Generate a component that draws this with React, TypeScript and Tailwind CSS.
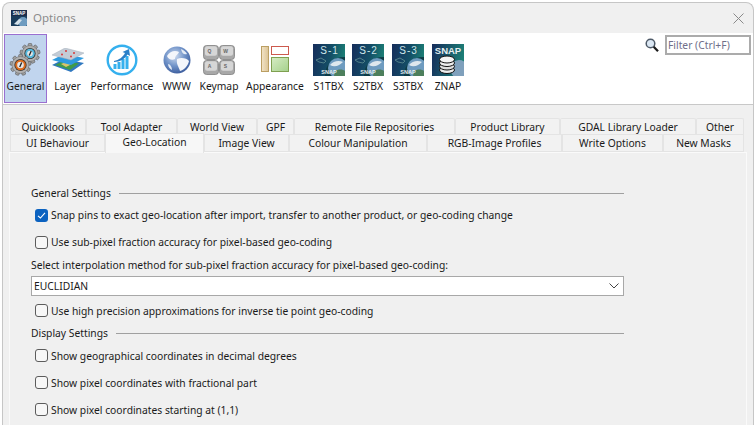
import React from "react";

const font = "font-['Noto_Sans',Arial,sans-serif]";

function Gear({ cx, cy, r, c }: { cx: number; cy: number; r: number; c: string }) {
  const teeth = Array.from({ length: 9 }, (_, i) => i * 40);
  return (
    <g>
      {teeth.map((a) => (
        <rect key={a} x={cx - 1.8} y={cy - r - 2} width={3.6} height={5} rx={0.8} fill="#a2a2a2" stroke="#4a4a4a" strokeWidth={0.5} transform={`rotate(${a} ${cx} ${cy})`} />
      ))}
      <circle cx={cx} cy={cy} r={r} fill="#b0b0b0" stroke="#666" strokeWidth={0.5} />
      <circle cx={cx} cy={cy} r={r - 2.4} fill="#333" />
      <circle cx={cx} cy={cy} r={r - 3.2} fill={c} />
      <circle cx={cx} cy={cy} r={r - 5.2} fill="#e6e6e6" />
      <line x1={cx - 0.8} y1={cy + 2} x2={cx + 1.2} y2={cy - 2.6} stroke="#222" strokeWidth={1.3} />
    </g>
  );
}

function GearsIcon() {
  return (
    <svg width="34" height="34" viewBox="0 0 34 34">
      <Gear cx={21} cy={10.5} r={8} c="#55b7dc" />
      <Gear cx={11.5} cy={22} r={8.5} c="#dd6c1e" />
    </svg>
  );
}

function LayerIcon() {
  return (
    <svg width="32" height="24" viewBox="0 0 32 24">
      <polygon points="0,17 12,11 32,15 19,24" fill="#2f78c0" />
      <polygon points="3,17 12,12.5 27,15.5 18,22" fill="#3f9a4a" />
      <polygon points="9,16 14,14 20,16 14,19" fill="#d9c46a" />
      <polygon points="0,12 12,6 32,10 19,17" fill="#2e9be0" />
      <polygon points="0,7 13,0 32,5 19,12" fill="#c3ccd6" stroke="#a5afbb" strokeWidth={0.5} />
      <circle cx="14" cy="3" r="1" fill="#d9393a" />
      <circle cx="22" cy="5" r="1" fill="#d9393a" />
      <circle cx="10" cy="6.5" r="1" fill="#d9393a" />
      <circle cx="19" cy="8.5" r="1" fill="#d9393a" />
    </svg>
  );
}

function PerfIcon() {
  return (
    <svg width="32" height="32" viewBox="0 0 32 32">
      <circle cx="16" cy="16" r="14.3" fill="#fff" stroke="#35b0ee" strokeWidth={2.4} />
      <rect x="7.5" y="20" width="3" height="5" fill="#35b0ee" />
      <rect x="11.5" y="18" width="3" height="7" fill="#35b0ee" />
      <rect x="15.5" y="15" width="3" height="10" fill="#35b0ee" />
      <rect x="19.5" y="12" width="3" height="13" fill="#35b0ee" />
      <path d="M8 17 C13 16 17 13 19 9 L16.5 8 L23 5 L24 12 L21.5 10.5 C19 15 14 18 8 18 Z" fill="#2a7fc8" />
    </svg>
  );
}

function GlobeIcon() {
  return (
    <svg width="28" height="28" viewBox="0 0 28 28">
      <defs>
        <radialGradient id="gl" cx="0.42" cy="0.35" r="0.75">
          <stop offset="0" stopColor="#cfdcf0" />
          <stop offset="0.5" stopColor="#6f92c8" />
          <stop offset="1" stopColor="#2f4f92" />
        </radialGradient>
      </defs>
      <circle cx="14" cy="14" r="13.5" fill="url(#gl)" />
      <path d="M4 10 C7 5 12 4 16 6 C15 9 12 9 12 13 C9 15 5 13 4 10 Z" fill="#f4f6fb" />
      <path d="M14 13 C18 11 24 12 26 15 C25 20 21 24 17 25 C16 21 13 18 14 13 Z" fill="#f4f6fb" />
      <path d="M18 3 C21 4 23 6 24 8 C22 9 19 8 18 3 Z" fill="#e4ebf5" />
      <path d="M5 18 C7 18 9 21 9 24 C7 23 5 21 5 18 Z" fill="#e4ebf5" />
    </svg>
  );
}

function KeymapIcon() {
  const keys: [number, number, string][] = [
    [0.5, 0.5, "Q"],
    [16.5, 0.5, "W"],
    [0.5, 15.5, "A"],
    [16.5, 15.5, "S"],
  ];
  return (
    <svg width="32" height="30" viewBox="0 0 32 30">
      {keys.map(([x, y, l]) => (
        <g key={l}>
          <rect x={x} y={y} width={15} height={14} rx={3} fill="#a8a8a8" stroke="#808080" strokeWidth={0.8} />
          <rect x={x + 1.5} y={y + 0.8} width={12} height={9.5} rx={2} fill="#d6d6d6" />
          <text x={x + 6} y={y + 7} fontSize={5} textAnchor="middle" fill="#666" fontFamily="Liberation Sans" fontWeight="bold">{l}</text>
        </g>
      ))}
    </svg>
  );
}

function AppearanceIcon() {
  return (
    <svg width="29" height="27" viewBox="0 0 29 27">
      <defs>
        <linearGradient id="ap1" x1="0" x2="1" y1="0" y2="0">
          <stop offset="0" stopColor="#f2e4c8" />
          <stop offset="1" stopColor="#dcc495" />
        </linearGradient>
        <linearGradient id="ap2" x1="0" x2="1" y1="0" y2="1">
          <stop offset="0" stopColor="#d6ecc4" />
          <stop offset="1" stopColor="#a5d18b" />
        </linearGradient>
      </defs>
      <rect x="0.5" y="0.5" width="7" height="25" fill="url(#ap1)" stroke="#bb9f63" />
      <rect x="10.5" y="0.5" width="17" height="8" fill="#fff" stroke="#cc5a4e" />
      <rect x="10.5" y="11.5" width="17" height="14" fill="url(#ap2)" stroke="#7fa050" />
    </svg>
  );
}

function SnapTile({ id, label }: { id: string; label: string }) {
  const gid = `sn${id}`;
  return (
    <svg width="32" height="32" viewBox="0 0 32 32">
      <defs>
        <linearGradient id={gid} x1="0" x2="1" y1="0.3" y2="0.5">
          <stop offset="0" stopColor="#16305c" />
          <stop offset="0.55" stopColor="#134f66" />
          <stop offset="1" stopColor="#1d8277" />
        </linearGradient>
      </defs>
      <rect width="32" height="32" fill={`url(#${gid})`} />
      <path d="M12 32 C12 20 20 13 32 13 L32 32 Z" fill="#0d3b45" />
      <circle cx="25" cy="24" r="10" fill="#6f9cc0" />
      <path d="M17 21 C20 17 26 16 30 18 C27 21 22 24 17 21 Z" fill="#dfe8ee" />
      <path d="M22 27 C25 25 30 25 32 27 L32 32 L21 32 Z" fill="#4d7f5c" />
      <path d="M3 16 L8 14 L13 17 L11 19 L6 18 Z" fill="none" stroke="#5f8f92" strokeWidth={0.8} />
      <text x="16.5" y="10" fontSize="10" textAnchor="middle" fill="#cfe6ea" fontFamily="Liberation Sans" letterSpacing="1">{label}</text>
      <text x="16" y="30" fontSize="5.5" fontWeight="bold" textAnchor="middle" fill="#e8eef0" fontFamily="Liberation Sans">SNAP</text>
    </svg>
  );
}

function ZnapTile() {
  return (
    <svg width="32" height="32" viewBox="0 0 32 32">
      <defs>
        <linearGradient id="zn" x1="0" x2="1" y1="0.3" y2="0.5">
          <stop offset="0" stopColor="#16305c" />
          <stop offset="1" stopColor="#1d8277" />
        </linearGradient>
      </defs>
      <rect width="32" height="32" fill="url(#zn)" />
      <circle cx="27" cy="25" r="9" fill="#7fa0bc" />
      <text x="16" y="10" fontSize="9.5" fontWeight="bold" textAnchor="middle" fill="#e6eef0" fontFamily="Liberation Sans">SNAP</text>
      <ellipse cx="15" cy="26" rx="7.5" ry="3.5" fill="#eee" stroke="#111" />
      <ellipse cx="15" cy="22.5" rx="7.5" ry="3.5" fill="#ddd" stroke="#111" />
      <ellipse cx="15" cy="19" rx="7.5" ry="3.5" fill="#eee" stroke="#111" />
      <ellipse cx="15" cy="15.5" rx="7.5" ry="3.5" fill="#f4f4f4" stroke="#111" />
    </svg>
  );
}

function Brand() {
  return (
    <svg width="16" height="16" viewBox="0 0 16 16">
      <rect width="16" height="16" fill="#1a3d5c" />
      <rect x="0" y="0" width="16" height="6" fill="#1a2d4c" />
      <circle cx="12" cy="12" r="5" fill="#6f9cc0" />
      <path d="M3 14 L8 9 L11 10 L7 15 Z" fill="#d5e2ea" />
      <text x="8" y="5" fontSize="4.5" fontWeight="bold" textAnchor="middle" fill="#fff" fontFamily="Liberation Sans">SNAP</text>
    </svg>
  );
}

const tools = [
  { label: "General", w: "w-[43px]", icon: <GearsIcon />, sel: true },
  { label: "Layer", w: "w-[41px]", icon: <LayerIcon /> },
  { label: "Performance", w: "w-[68px]", icon: <PerfIcon /> },
  { label: "WWW", w: "w-[41px]", icon: <GlobeIcon /> },
  { label: "Keymap", w: "w-[44px]", icon: <KeymapIcon /> },
  { label: "Appearance", w: "w-[68px]", icon: <AppearanceIcon /> },
  { label: "S1TBX", w: "w-[39px]", icon: <SnapTile id="1" label="S-1" /> },
  { label: "S2TBX", w: "w-[40px]", icon: <SnapTile id="2" label="S-2" /> },
  { label: "S3TBX", w: "w-[40px]", icon: <SnapTile id="3" label="S-3" /> },
  { label: "ZNAP", w: "w-[40px]", icon: <ZnapTile /> },
];

const row1 = [
  ["Quicklooks", "w-[76px]"],
  ["Tool Adapter", "w-[91px]"],
  ["World View", "w-[80px]"],
  ["GPF", "w-[37px]"],
  ["Remote File Repositories", "w-[161px]"],
  ["Product Library", "w-[105px]"],
  ["GDAL Library Loader", "w-[136px]"],
  ["Other", "w-[48px]"],
];
const row2 = [
  ["UI Behaviour", "w-[95px]"],
  ["Geo-Location", "w-[99px]"],
  ["Image View", "w-[85px]"],
  ["Colour Manipulation", "w-[138px]"],
  ["RGB-Image Profiles", "w-[135px]"],
  ["Write Options", "w-[101px]"],
  ["New Masks", "w-[81px]"],
];

function Check({ label, checked, h }: { label: string; checked?: boolean; h: string }) {
  return (
    <div className={`flex items-center pl-1 ${h}`}>
      {checked ? (
        <span className="w-[13px] h-[13px] rounded-[3px] bg-[#0b62c0] flex items-center justify-center shrink-0">
          <svg width="9" height="9" viewBox="0 0 9 9">
            <path d="M1 4.8 L3.4 7 L8 1.8" fill="none" stroke="#fff" strokeWidth="1.1" />
          </svg>
        </span>
      ) : (
        <span className="w-[13px] h-[13px] rounded-[3px] border border-[#5c5c5c] bg-[#f7f7f7] shrink-0" />
      )}
      <span className="ml-[3px]">{label}</span>
    </div>
  );
}

function Section({ label, h }: { label: string; h: string }) {
  return (
    <div className={`flex items-center ${h}`}>
      <span>{label}</span>
      <span className="flex-1 h-px bg-[#a0a0a0] ml-[8px]" />
    </div>
  );
}

export default function App() {
  return (
    <div className={`w-[756px] h-[425px] overflow-hidden bg-white pl-[2px] pt-[2px] text-[10.3px] leading-[14px] text-[#1a1a1a] ${font}`}>
      <div className="w-[752px] h-[423px] border-x border-t border-[#c6c6c6] rounded-t-lg overflow-hidden bg-[#f0f0f0] flex flex-col">
        <div className="h-[30px] shrink-0 flex items-center pl-[8px] pr-[9px]">
          <Brand />
          <span className="ml-[6px] text-[11.5px] text-[#8b8b8b]">Options</span>
          <svg className="ml-auto" width="11" height="11" viewBox="0 0 11 11">
            <path d="M0.5 0.5 L10.5 10.5 M10.5 0.5 L0.5 10.5" stroke="#8a8a8a" strokeWidth="1" />
          </svg>
        </div>
        <div className="h-[72px] shrink-0 bg-white border-b border-[#c8c8c8] flex pl-px pt-px">
          {tools.map((t) => (
            <div
              key={t.label}
              className={`${t.w} h-[69px] flex flex-col items-center shrink-0 ${t.sel ? "bg-[#c1d5ee] border border-[#9a6fd0]" : ""}`}
            >
              <div className={`h-[43px] flex items-center justify-center ${t.sel ? "-mt-px" : ""} pt-[8px]`}>{t.icon}</div>
              <span className="mt-[2px] whitespace-nowrap">{t.label}</span>
            </div>
          ))}
          <div className="ml-auto flex items-start pt-px pr-[2px]">
            <svg className="mt-[3px] mr-[6px]" width="14" height="15" viewBox="0 0 14 15">
              <circle cx="5.5" cy="5.5" r="4.3" fill="#dce8f4" stroke="#4e5a68" strokeWidth="1.5" />
              <path d="M8.7 8.7 L13 13.2" stroke="#1c1c1c" strokeWidth="2.2" />
            </svg>
            <div className="w-[86px] h-[20px] border-2 border-[#ababab] bg-white flex items-center pl-[1px] text-[#6f6f8a]">
              Filter (Ctrl+F)
            </div>
          </div>
        </div>
        <div className="flex-1 pl-[6px] pr-[7px] pt-[13px] flex flex-col">
          <div className="flex pl-px h-[16px]">
            {row1.map(([l, w]) => (
              <div key={l} className={`${w} shrink-0 flex items-center justify-center border border-b-0 border-[#e4e4e4] bg-[#f2f2f2] rounded-t-[2px]`}>{l}</div>
            ))}
          </div>
          <div className="flex pl-px h-[18px] relative z-10">
            {row2.map(([l, w]) =>
              l === "Geo-Location" ? (
                <div key={l} className={`${w} h-[20px] -mt-px shrink-0 flex items-center justify-center pb-[4px] border border-b-0 border-[#e4e4e4] bg-[#f7f7f7]`}>{l}</div>
              ) : (
                <div key={l} className={`${w} shrink-0 flex items-center justify-center border border-[#e4e4e4] bg-[#f2f2f2]`}>{l}</div>
              ),
            )}
          </div>
          <div className="w-[738px] flex-1 border-l border-t border-r border-[#fafafa] pl-[21px] pt-[31px]">
            <div className="w-[593px] flex flex-col">
              <Section label="General Settings" h="h-[18px]" />
              <Check checked label="Snap pins to exact geo-location after import, transfer to another product, or geo-coding change" h="h-[26px]" />
              <Check label="Use sub-pixel fraction accuracy for pixel-based geo-coding" h="h-[28px]" />
              <div className="h-[18px] flex items-center">Select interpolation method for sub-pixel fraction accuracy for pixel-based geo-coding:</div>
              <div className="h-[20px] mt-[2px] border border-[#a8a8a8] bg-white flex items-center pl-[2px] pr-[4px] justify-between">
                <span>EUCLIDIAN</span>
                <svg width="10" height="6" viewBox="0 0 10 6">
                  <path d="M0.5 0.5 L5 5 L9.5 0.5" fill="none" stroke="#444" strokeWidth="1" />
                </svg>
              </div>
              <Check label="Use high precision approximations for inverse tie point geo-coding" h="h-[29px]" />
              <Section label="Display Settings" h="h-[16px]" />
              <Check label="Show geographical coordinates in decimal degrees" h="h-[29px]" />
              <Check label="Show pixel coordinates with fractional part" h="h-[25px]" />
              <Check label="Show pixel coordinates starting at (1,1)" h="h-[29px]" />
            </div>
          </div>
        </div>
      </div>
    </div>
  );
}
